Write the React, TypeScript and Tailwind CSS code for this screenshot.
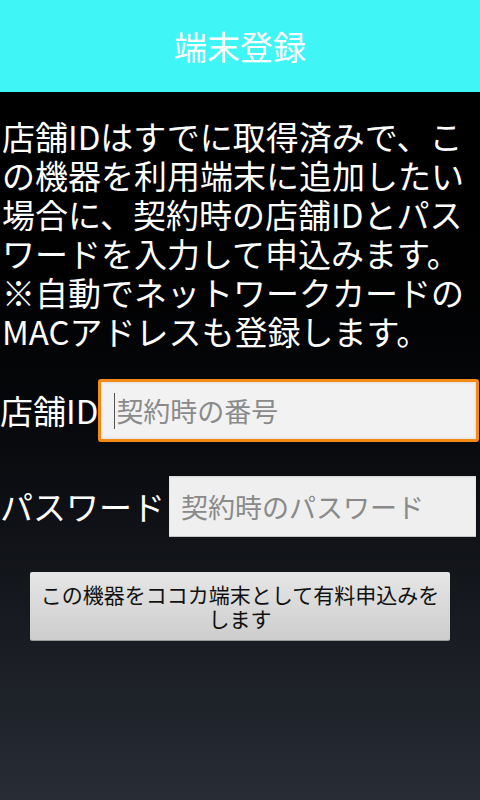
import React from 'react';

const font = { fontFamily: '"Noto Sans CJK JP", "Noto Sans", sans-serif' };

const App: React.FC = () => {
    return (
        <div className="w-[480px] h-[800px] flex flex-col overflow-hidden" style={font}>
            <div className="h-[92px] bg-[#40f5f5] flex items-center justify-center shrink-0">
                <h1 className="text-white text-[33px] leading-none">端末登録</h1>
            </div>
            <div className="flex-1 bg-gradient-to-b from-black to-[#282c35] pt-[25px]">
                <p className="text-white text-[33px] leading-[39px] pl-[2px] pr-[2px]">
                    店舗IDはすでに取得済みで、この機器を利用端末に追加したい場合に、契約時の店舗IDとパスワードを入力して申込みます。※自動でネットワークカードのMACアドレスも登録します。
                </p>

                <div className="flex items-center mt-[28px] h-[63px]">
                    <label className="text-white text-[33px] leading-none shrink-0">店舗ID</label>
                    <div className="flex-1 h-[63px] mr-[1px] border-[3px] border-[#f28a14] rounded-[3px] bg-[#f2f2f2] flex items-center pl-[13px] shadow-[inset_0_0_3px_rgba(0,0,0,0.15)]">
                        <span className="w-[1px] h-[36px] bg-[#555] mr-[1px]"></span>
                        <span className="text-[27px] leading-none text-[#8a8a8a]">契約時の番号</span>
                    </div>
                </div>

                <div className="flex items-center mt-[34px] h-[61px]">
                    <label className="text-white text-[33px] leading-none shrink-0">パスワード</label>
                    <div className="flex-1 h-[61px] ml-[4px] mr-[4px] bg-[#efefef] border-b border-[#c4c4c4] flex items-center pl-[12px] shadow-[inset_0_1px_2px_rgba(0,0,0,0.12)]">
                        <span className="text-[27px] leading-none text-[#8a8a8a]">契約時のパスワード</span>
                    </div>
                </div>

                <div className="mt-[35px] flex justify-center">
                    <button className="w-[420px] h-[69px] bg-gradient-to-b from-[#e6e6e6] to-[#cdcdcd] border-b border-[#9a9a9a] rounded-[2px] text-[#111] text-[21px] leading-[24px] px-[8px] flex items-center justify-center text-center">
                        この機器をココカ端末として有料申込みをします
                    </button>
                </div>
            </div>
        </div>
    );
};

export default App;
